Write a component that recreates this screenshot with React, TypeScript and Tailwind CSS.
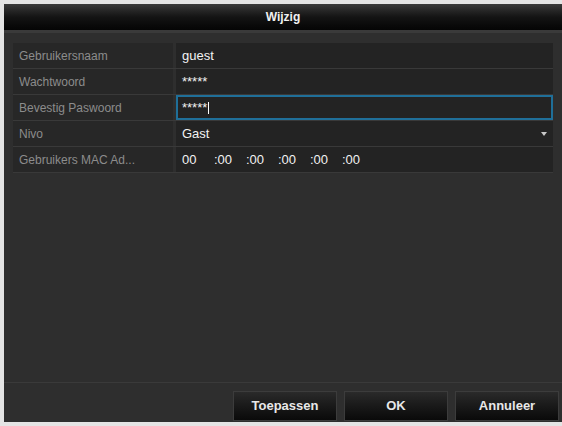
import React from "react";

type Row = {
    label: string;
    value: React.ReactNode;
    focused?: boolean;
    select?: boolean;
};

function Caret() {
    return (
        <svg viewBox="0 0 6 4" className="h-[4px] w-[6px]">
            <path d="M0 0 L6 0 L3 4 Z" fill="#c8c8c8" />
        </svg>
    );
}

export default function App() {
    const rows: Row[] = [
        { label: "Gebruikersnaam", value: "guest" },
        { label: "Wachtwoord", value: "*****" },
        {
            label: "Bevestig Paswoord",
            value: (
                <span className="flex items-center">
                    *****<span className="ml-[1px] h-[12px] w-[1px] bg-white" />
                </span>
            ),
            focused: true,
        },
        { label: "Nivo", value: "Gast", select: true },
        {
            label: "Gebruikers MAC Ad...",
            value: (
                <span className="flex">
                    {["00", ":00", ":00", ":00", ":00", ":00"].map((s, i) => (
                        <span key={i} className="w-[32px]">
                            {s}
                        </span>
                    ))}
                </span>
            ),
        },
    ];

    return (
        <div
            className="h-[426px] w-[562px] bg-[#e4e4e4] pl-[4px] pt-[4px]"
            style={{ fontFamily: '"Liberation Sans", Arial, sans-serif' }}
        >
            <div className="flex h-[418px] w-[558px] flex-col bg-[#2e2e2e]">
                <div className="flex h-[29px] items-center justify-center border-b-[3px] border-[#3a3a3a] bg-gradient-to-b from-[#3a3a3a] via-[#141414] to-[#050505] text-[12px] font-bold text-[#f0f0f0]">
                    Wijzig
                </div>

                <div className="flex flex-1 flex-col px-[9px] pt-[10px]">
                    {rows.map((r, i) => (
                        <div key={i} className="flex h-[26px] gap-[3px] border-b border-[#393939]">
                            <div className="flex w-[160px] items-center bg-[#272727] pl-[6px] text-[12px] text-[#8c8c8c]">
                                {r.label}
                            </div>
                            <div
                                className={[
                                    "flex flex-1 items-center justify-between bg-[#232323] pl-[4px] pr-[4px] text-[13px] text-[#f2f2f2]",
                                    r.focused ? "border-2 border-[#1f6f99]" : "border-2 border-transparent",
                                ].join(" ")}
                            >
                                <span>{r.value}</span>
                                {r.select && <Caret />}
                            </div>
                        </div>
                    ))}
                </div>

                <div className="flex h-[40px] items-start justify-end gap-[7px] border-t border-[#3a3a3a] pr-[3px] pt-[8px]">
                    {["Toepassen", "OK", "Annuleer"].map((b) => (
                        <button
                            key={b}
                            className="flex h-[30px] w-[104px] items-center justify-center border border-[#3c3c3c] bg-gradient-to-b from-[#2a2a2a] to-[#0a0a0a] text-[13px] font-bold text-[#e8e8e8]"
                        >
                            {b}
                        </button>
                    ))}
                </div>
            </div>
        </div>
    );
}
